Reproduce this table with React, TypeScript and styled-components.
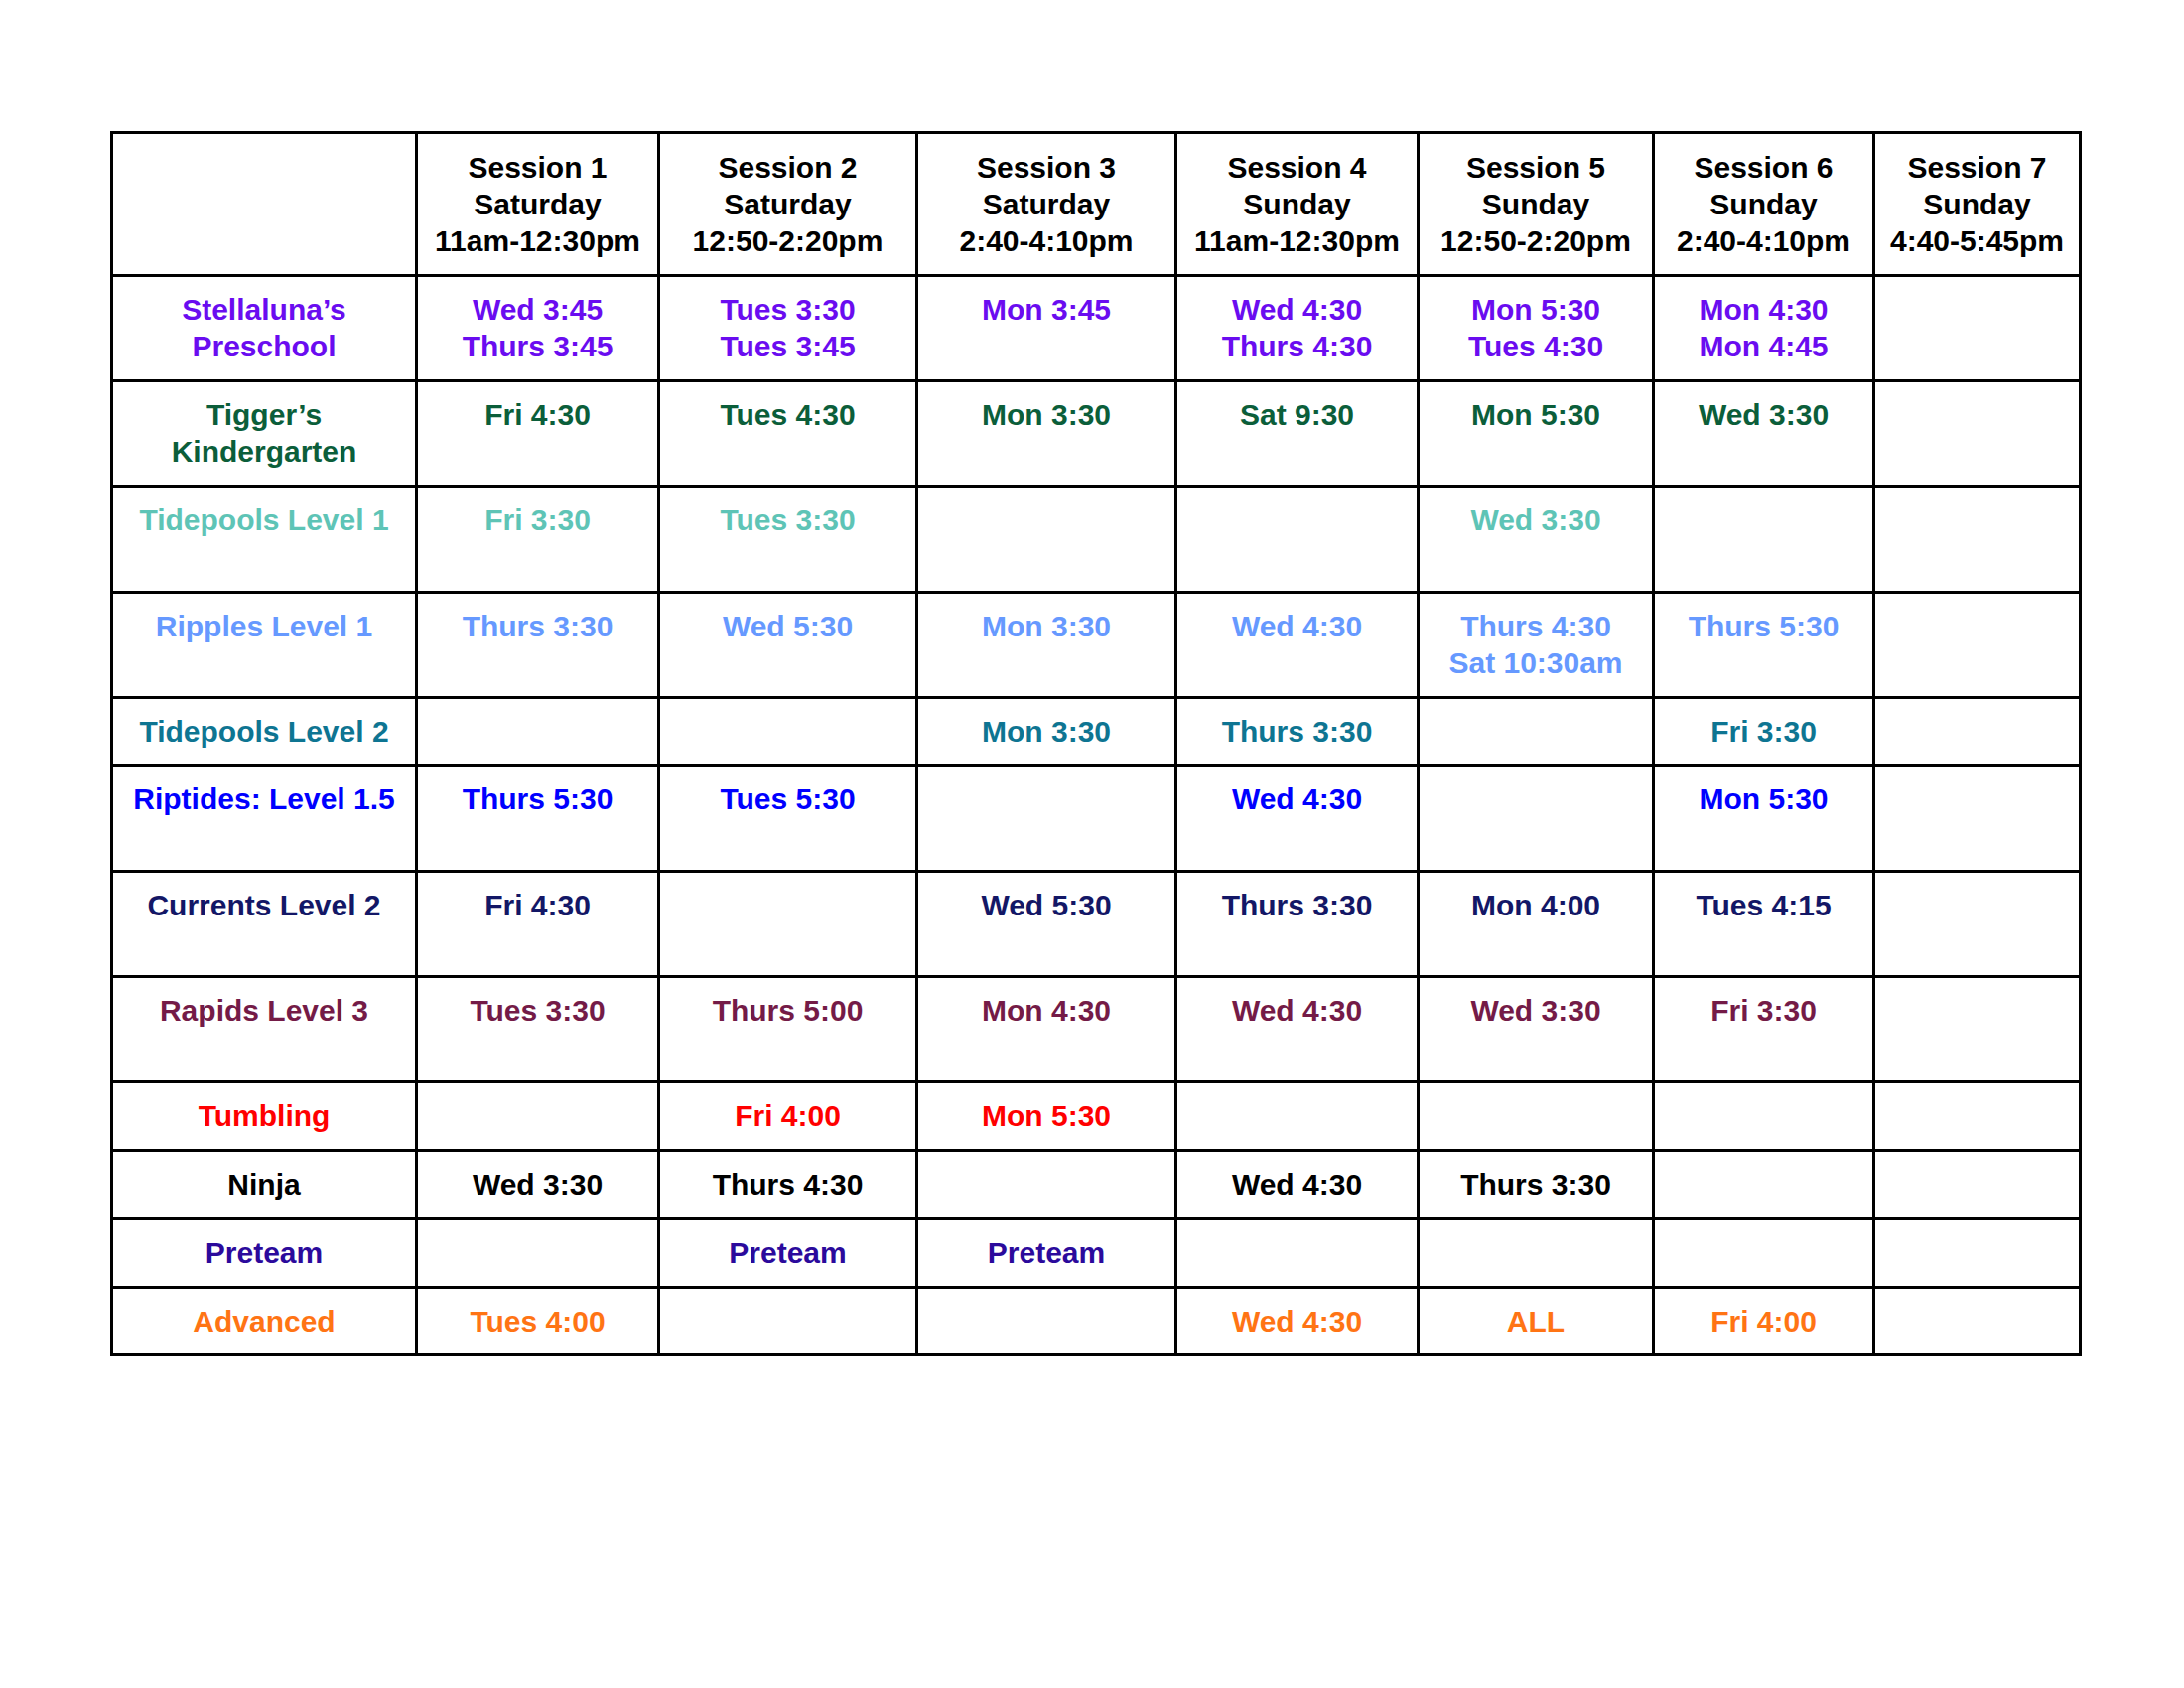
import React from "react";
import styled, { createGlobalStyle } from "styled-components";

const GlobalStyle = createGlobalStyle`
  html, body {
    margin: 0;
    padding: 0;
    background: #ffffff;
  }
  body {
    font-family: "Liberation Sans", Arial, sans-serif;
  }
`;

const Page = styled.div`
  width: 2200px;
  min-height: 1700px;
  box-sizing: border-box;
  padding: 132px 0 0 111px;
  background: #ffffff;
`;

const Table = styled.table`
  border-collapse: collapse;
  table-layout: fixed;
  width: 1986px;
  font-family: "Liberation Sans", Arial, sans-serif;
  font-weight: 700;
  font-size: 30px;
  line-height: 37px;
`;

const Row = styled.tr<{ $h: number }>`
  height: ${(p) => p.$h}px;
`;

const Cell = styled.td<{ $color: string }>`
  border: 3px solid #000000;
  padding: 14px 0 0 0;
  vertical-align: top;
  text-align: center;
  color: ${(p) => p.$color};
  white-space: nowrap;
  overflow: hidden;
`;

const HeadCell = styled.th`
  border: 3px solid #000000;
  padding: 14.5px 0 0 0;
  vertical-align: top;
  text-align: center;
  font-weight: 700;
  color: #000000;
  white-space: nowrap;
`;

const Line = styled.div`
  display: block;
`;

const colWidths = [307, 244, 260, 261, 244, 237, 222, 208];

const headers = [
  ["Session 1", "Saturday", "11am-12:30pm"],
  ["Session 2", "Saturday", "12:50-2:20pm"],
  ["Session 3", "Saturday", "2:40-4:10pm"],
  ["Session 4", "Sunday", "11am-12:30pm"],
  ["Session 5", "Sunday", "12:50-2:20pm"],
  ["Session 6", "Sunday", "2:40-4:10pm"],
  ["Session 7", "Sunday", "4:40-5:45pm"],
];

type RowData = {
  label: string[];
  color: string;
  h: number;
  cells: string[][];
};

const rows: RowData[] = [
  {
    label: ["Stellaluna’s", "Preschool"],
    color: "#6a0cf0",
    h: 106,
    cells: [
      ["Wed 3:45", "Thurs 3:45"],
      ["Tues 3:30", "Tues 3:45"],
      ["Mon 3:45"],
      ["Wed 4:30", "Thurs 4:30"],
      ["Mon 5:30", "Tues 4:30"],
      ["Mon 4:30", "Mon 4:45"],
      [],
    ],
  },
  {
    label: ["Tigger’s", "Kindergarten"],
    color: "#0b5e3a",
    h: 106,
    cells: [["Fri 4:30"], ["Tues 4:30"], ["Mon 3:30"], ["Sat 9:30"], ["Mon 5:30"], ["Wed 3:30"], []],
  },
  {
    label: ["Tidepools Level 1"],
    color: "#5ec4b6",
    h: 107,
    cells: [["Fri 3:30"], ["Tues 3:30"], [], [], ["Wed 3:30"], [], []],
  },
  {
    label: ["Ripples Level 1"],
    color: "#6699ff",
    h: 106,
    cells: [
      ["Thurs 3:30"],
      ["Wed 5:30"],
      ["Mon 3:30"],
      ["Wed 4:30"],
      ["Thurs 4:30", "Sat 10:30am"],
      ["Thurs 5:30"],
      [],
    ],
  },
  {
    label: ["Tidepools Level 2"],
    color: "#0e7592",
    h: 68,
    cells: [[], [], ["Mon 3:30"], ["Thurs 3:30"], [], ["Fri 3:30"], []],
  },
  {
    label: ["Riptides: Level 1.5"],
    color: "#0000ff",
    h: 107,
    cells: [["Thurs 5:30"], ["Tues 5:30"], [], ["Wed 4:30"], [], ["Mon 5:30"], []],
  },
  {
    label: ["Currents Level 2"],
    color: "#131766",
    h: 106,
    cells: [["Fri 4:30"], [], ["Wed 5:30"], ["Thurs 3:30"], ["Mon 4:00"], ["Tues 4:15"], []],
  },
  {
    label: ["Rapids Level 3"],
    color: "#741b47",
    h: 106,
    cells: [["Tues 3:30"], ["Thurs 5:00"], ["Mon 4:30"], ["Wed 4:30"], ["Wed 3:30"], ["Fri 3:30"], []],
  },
  {
    label: ["Tumbling"],
    color: "#ff0000",
    h: 69,
    cells: [[], ["Fri 4:00"], ["Mon 5:30"], [], [], [], []],
  },
  {
    label: ["Ninja"],
    color: "#000000",
    h: 69,
    cells: [["Wed 3:30"], ["Thurs 4:30"], [], ["Wed 4:30"], ["Thurs 3:30"], [], []],
  },
  {
    label: ["Preteam"],
    color: "#2b0a9c",
    h: 69,
    cells: [[], ["Preteam"], ["Preteam"], [], [], [], []],
  },
  {
    label: ["Advanced"],
    color: "#ff7414",
    h: 68,
    cells: [["Tues 4:00"], [], [], ["Wed 4:30"], ["ALL"], ["Fri 4:00"], []],
  },
];

export default function App() {
  return (
    <>
      <GlobalStyle />
      <Page>
        <Table>
          <colgroup>
            {colWidths.map((w, i) => (
              <col key={i} style={{ width: w }} />
            ))}
          </colgroup>
          <thead>
            <Row $h={144}>
              <HeadCell />
              {headers.map((h, i) => (
                <HeadCell key={i}>
                  {h.map((l, j) => (
                    <Line key={j}>{l}</Line>
                  ))}
                </HeadCell>
              ))}
            </Row>
          </thead>
          <tbody>
            {rows.map((r, i) => (
              <Row key={i} $h={r.h}>
                <Cell $color={r.color}>
                  {r.label.map((l, j) => (
                    <Line key={j}>{l}</Line>
                  ))}
                </Cell>
                {r.cells.map((c, k) => (
                  <Cell key={k} $color={r.color}>
                    {c.map((l, j) => (
                      <Line key={j}>{l}</Line>
                    ))}
                  </Cell>
                ))}
              </Row>
            ))}
          </tbody>
        </Table>
      </Page>
    </>
  );
}
